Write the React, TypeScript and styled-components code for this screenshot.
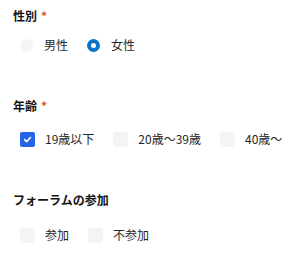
import React from 'react';
import styled, { createGlobalStyle } from 'styled-components';

const GlobalStyle = createGlobalStyle`
  body {
    margin: 0;
    background: #ffffff;
    font-family: "Noto Sans CJK JP", "Noto Sans", sans-serif;
    color: #222222;
  }
`;

const Page = styled.div`
  width: 300px;
  padding: 7px 13px 0;
  box-sizing: border-box;
`;

const Field = styled.div`
  & + & {
    margin-top: 42px;
  }
`;

const Title = styled.div`
  font-size: 12px;
  font-weight: 700;
  line-height: 18px;
  color: #141414;
`;

const Required = styled.span`
  color: #e0551f;
  margin-left: 4px;
`;

const Group = styled.div<{ $top: number }>`
  display: flex;
  align-items: center;
  gap: 19px;
  margin-top: ${p => p.$top}px;
  padding-left: 7px;
  height: 20px;
`;

const Option = styled.label`
  display: flex;
  align-items: center;
  gap: 11px;
  font-size: 12px;
  line-height: 20px;
  color: #262626;
`;

const RadioMark = styled.span<{ $on?: boolean }>`
  width: 13px;
  height: 13px;
  border-radius: 50%;
  box-sizing: border-box;
  background: ${p => (p.$on ? '#ffffff' : '#f4f4f5')};
  border: ${p => (p.$on ? '4px solid #0b74c8' : 'none')};
  flex-shrink: 0;
`;

const CheckMark = styled.span<{ $on?: boolean }>`
  width: 15px;
  height: 15px;
  border-radius: 2px;
  background: ${p => (p.$on ? '#2563eb' : '#f4f4f5')};
  display: flex;
  align-items: center;
  justify-content: center;
  flex-shrink: 0;
  margin-right: -1px;
`;

const Radio: React.FC<{ on?: boolean; label: string }> = ({ on, label }) => (
  <Option>
    <RadioMark $on={on} />
    {label}
  </Option>
);

const Check: React.FC<{ on?: boolean; label: string }> = ({ on, label }) => (
  <Option>
    <CheckMark $on={on}>
      {on && (
        <svg width="9" height="9" viewBox="0 0 10 10">
          <path d="M1.8 5.2 L4.1 7.4 L8.3 2.8" fill="none" stroke="#fff" strokeWidth="1.8" strokeLinecap="round" strokeLinejoin="round" />
        </svg>
      )}
    </CheckMark>
    {label}
  </Option>
);

export default function App() {
  return (
    <Page>
      <GlobalStyle />
      <Field>
        <Title>性別<Required>*</Required></Title>
        <Group $top={10}>
          <Radio label="男性" />
          <Radio on label="女性" />
        </Group>
      </Field>
      <Field>
        <Title>年齢<Required>*</Required></Title>
        <Group $top={14}>
          <Check on label="19歳以下" />
          <Check label="20歳〜39歳" />
          <Check label="40歳〜" />
        </Group>
      </Field>
      <Field>
        <Title>フォーラムの参加</Title>
        <Group $top={16}>
          <Check label="参加" />
          <Check label="不参加" />
        </Group>
      </Field>
    </Page>
  );
}
